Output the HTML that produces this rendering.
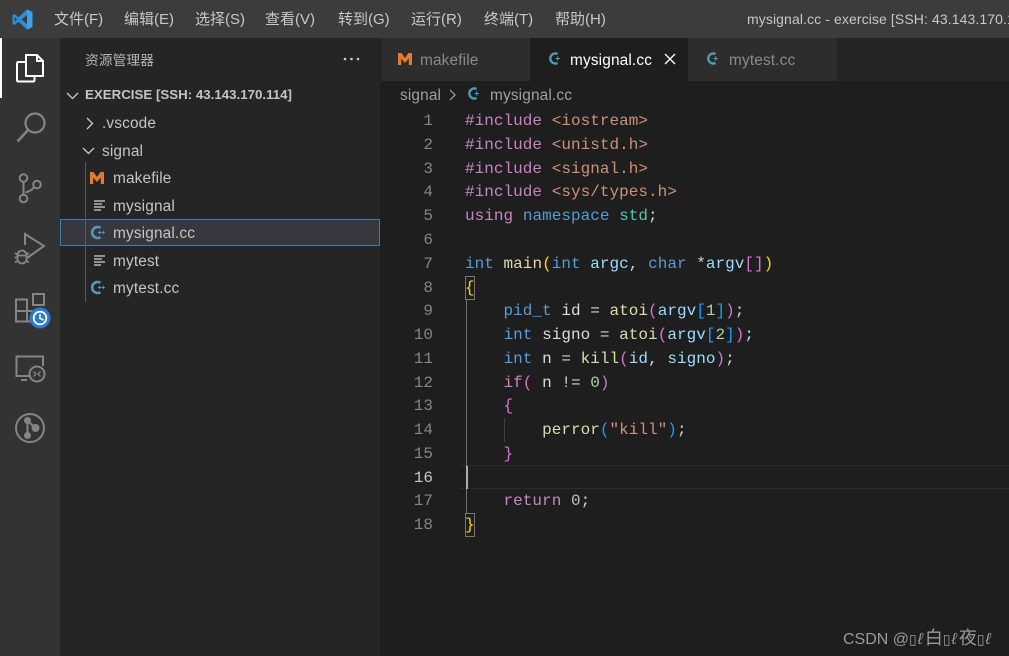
<!DOCTYPE html>
<html><head><meta charset="utf-8">
<style>
html,body{margin:0;padding:0}
body{width:1009px;height:656px;overflow:hidden;position:relative;background:#1e1e1e;font-family:"Liberation Sans","Noto Sans CJK SC",sans-serif}
div,span.a,svg.a{position:absolute}
.m{top:10px;font-size:15px;line-height:20px;color:#c8c8c8;white-space:nowrap}
.t{font-size:15.4px;line-height:20px;color:#c4c4c4;white-space:nowrap;letter-spacing:.15px;margin-top:1px}
.n{left:400px;width:33px;text-align:right;font:16px/24px "Liberation Mono",monospace;color:#858585;margin-top:1px}
.c{left:465px;font:16px/24px "Liberation Mono",monospace;color:#d4d4d4;white-space:pre;letter-spacing:.03px;margin-top:1px}
.k{color:#c586c0}.s{color:#ce9178}.b{color:#569cd6}.g{color:#4ec9b0}.f{color:#dcdcaa}.v{color:#9cdcfe}.y{color:#ffd700}.p{color:#da70d6}.l{color:#179fff}.o{color:#b5cea8}.w{color:#dcdcdc}
svg{overflow:visible}
</style></head><body>
<div style="left:0;top:0;width:1009px;height:38px;background:#3c3c3c"></div>
<div style="left:0;top:38px;width:60px;height:618px;background:#333333"></div>
<div style="left:60px;top:38px;width:320px;height:618px;background:#252526"></div>
<div style="left:380px;top:38px;width:629px;height:43px;background:#252526"></div>
<div style="left:382px;top:38px;width:148px;height:43px;background:#2d2d2d"></div>
<div style="left:530px;top:38px;width:158px;height:43px;background:#1e1e1e"></div>
<div style="left:688px;top:38px;width:149px;height:43px;background:#2d2d2d"></div>
<div style="left:0;top:38px;width:2px;height:60px;background:#fff"></div>

<svg class="a" style="left:12px;top:9px" width="21" height="21" viewBox="0 0 21 21"><path d="M15 0.5 L20.5 3 V18 L15 20.5 L6.5 12.8 L2.500 16 L0.500 15 V6 L2.500 5 L6.500 8.200 Z M15 6 L9.500 10.500 L15 15 Z M2.700 8 V13 L5 10.500 Z" fill="#2b8fdc" fill-rule="evenodd"/><path d="M15 0.5 L20.5 3 V18 L15 20.5 Z" fill="#3da2e8"/></svg>

<div class="m" style="left:54px">文件(F)</div>
<div class="m" style="left:124px">编辑(E)</div>
<div class="m" style="left:195px">选择(S)</div>
<div class="m" style="left:265px">查看(V)</div>
<div class="m" style="left:338px">转到(G)</div>
<div class="m" style="left:411px">运行(R)</div>
<div class="m" style="left:484px">终端(T)</div>
<div class="m" style="left:555px">帮助(H)</div>
<div class="m" style="left:747px;top:9px;font-size:14px;color:#c8c8c8;letter-spacing:.1px">mysignal.cc - exercise [SSH: 43.143.170.114]</div>

<!-- activity icons -->
<svg class="a" style="left:0;top:38px" width="60" height="420" viewBox="0 38 60 420" fill="none" stroke="#858585" stroke-width="2">
<path d="M25 62 H18.500 Q17 62 17 63.500 V80 Q17 81.500 18.500 81.500 H33 Q34.500 81.500 34.500 80 V76" stroke="#fff" stroke-width="2"/>
<path d="M26 76 V55 H37 L43 61 V76 Z M37 54.500 V61 H43" stroke="#fff" stroke-width="2"/>
<circle cx="35" cy="123" r="9.500" stroke-width="2.200"/><path d="M28 130 L17.500 141.500" stroke-width="2.500"/>
<circle cx="23.500" cy="178" r="3.800"/><circle cx="23.500" cy="198.500" r="3.800"/><circle cx="37" cy="184.500" r="3.800"/>
<path d="M23.500 182 V194.500 M34 187.500 Q31 191 25.500 192.500"/>
<path d="M25 245 V234 L44 246 L27 258"/>
<path d="M17.500 255 a4.500 4.500 0 0 1 9 0 v4 a4.500 4.500 0 0 1 -9 0 Z M15 253 l3 2 M29 253 l-3 2 M14.500 257.500 H17.500 M26.500 257.500 H29.500 M15 262.500 l3 -2 M29 262.500 l-3 -2 M18 255.500 H26 M19 251 l1 1.500 M25 251 l-1 1.500" stroke-width="1.800"/>
<path d="M16 299.500 H27 V321.500 H16 Z M16 311 H38 M27 321.500 H36" stroke-width="2"/>
<rect x="33" y="294" width="11" height="11" stroke-width="2"/>
<circle cx="40" cy="318" r="9.500" fill="#2a7bd0" stroke="#2a7bd0"/>
<circle cx="40" cy="318" r="6.300" stroke="#fff" stroke-width="1.800"/>
<path d="M40 314 V318.500 L43.500 320" stroke="#fff" stroke-width="1.500"/>
<path d="M33 376 H16.500 V356.500 H43 V366 M27 380 H21" stroke-width="2"/>
<circle cx="37" cy="374" r="7.500" fill="#333333" stroke-width="2"/>
<path d="M33.500 371.500 L36 374 L33.500 376.500 M40.500 371.500 L38 374 L40.500 376.500" stroke-width="1.300"/>
<circle cx="30" cy="428" r="14" stroke-width="2"/>
<circle cx="27.500" cy="420.500" r="2.500" fill="#858585"/><circle cx="27.500" cy="435.500" r="2.500" fill="#858585"/><circle cx="35.500" cy="428" r="3" fill="#858585"/>
<path d="M27.500 421 V435 M28 421 L35 428" stroke-width="2"/>
</svg>

<!-- sidebar -->
<div class="t" style="left:85px;top:50px;font-size:13.800px;letter-spacing:0;color:#b4b4b4">资源管理器</div>
<svg class="a" style="left:343px;top:57px" width="17" height="4"><circle cx="2" cy="2" r="1.300" fill="#ccc"/><circle cx="8.500" cy="2" r="1.300" fill="#ccc"/><circle cx="15" cy="2" r="1.300" fill="#ccc"/></svg>

<svg class="a" style="left:66px;top:92px" width="13" height="8" fill="none" stroke="#cccccc" stroke-width="1.300"><path d="M1 1 L6.500 6.500 L12 1"/></svg>
<div class="t" style="left:85px;top:84px;font-size:13.300px;font-weight:bold;letter-spacing:0;color:#c4c4c4">EXERCISE [SSH: 43.143.170.114]</div>
<svg class="a" style="left:86px;top:117px" width="8" height="13" fill="none" stroke="#cccccc" stroke-width="1.300"><path d="M1 1 L6.500 6.500 L1 12"/></svg>
<div class="t" style="left:102px;top:113px">.vscode</div>
<svg class="a" style="left:82px;top:147px" width="13" height="8" fill="none" stroke="#cccccc" stroke-width="1.300"><path d="M1 1 L6.500 6.500 L12 1"/></svg>
<div class="t" style="left:102px;top:141px">signal</div>
<div style="left:60px;top:219px;width:318px;height:25px;background:#37373d;border:1px solid #3d7bb5"></div>
<div style="left:85px;top:162px;width:1px;height:140px;background:#585858"></div>

<svg class="a" style="left:90px;top:172px" width="14" height="12" viewBox="0 0 14 12"><path d="M0 12 V0 H3.500 L7 5 L10.500 0 H14 V12 H10.800 V5.500 L7 10 L3.200 5.500 V12 Z" fill="#e37933"/></svg>
<div class="t" style="left:113px;top:168px">makefile</div>
<svg class="a" style="left:94px;top:200px" width="12" height="12" fill="none" stroke="#d4d4d4" stroke-width="1.200"><path d="M0 1 H11 M0 4 H8 M0 7 H11 M0 10 H7"/></svg>
<div class="t" style="left:113px;top:196px">mysignal</div>
<svg class="a" style="left:91px;top:226px" width="14" height="13" viewBox="0 0 14 13" fill="none" stroke="#519aba"><path d="M9.500 1.800 A5.500 5.500 0 1 0 9.500 11.200" stroke-width="2.600"/><path d="M7 6.500 H10.200 M8.600 4.900 V8.100 M10.600 6.500 H13.800 M12.200 4.900 V8.100" stroke-width="1"/></svg>
<div class="t" style="left:113px;top:223px">mysignal.cc</div>
<svg class="a" style="left:94px;top:255px" width="12" height="12" fill="none" stroke="#d4d4d4" stroke-width="1.200"><path d="M0 1 H11 M0 4 H8 M0 7 H11 M0 10 H7"/></svg>
<div class="t" style="left:113px;top:251px">mytest</div>
<svg class="a" style="left:91px;top:281px" width="14" height="13" viewBox="0 0 14 13" fill="none" stroke="#519aba"><path d="M9.500 1.800 A5.500 5.500 0 1 0 9.500 11.200" stroke-width="2.600"/><path d="M7 6.500 H10.200 M8.600 4.900 V8.100 M10.600 6.500 H13.800 M12.200 4.900 V8.100" stroke-width="1"/></svg>
<div class="t" style="left:113px;top:278px">mytest.cc</div>

<!-- tabs -->
<svg class="a" style="left:398px;top:53px" width="14" height="12" viewBox="0 0 14 12"><path d="M0 12 V0 H3.500 L7 5 L10.500 0 H14 V12 H10.800 V5.500 L7 10 L3.200 5.500 V12 Z" fill="#e37933"/></svg>
<div class="t" style="left:420px;top:50px;color:#8a8a8a">makefile</div>
<svg class="a" style="left:549px;top:52px" width="14" height="13" viewBox="0 0 14 13" fill="none" stroke="#519aba"><path d="M8.500 2 A5 5 0 1 0 8.500 11" stroke-width="2.400"/><path d="M6.500 6.500 H11 M8.750 4.300 V8.700" stroke-width="1"/></svg>
<div class="t" style="left:570px;top:50px;color:#ffffff">mysignal.cc</div>
<svg class="a" style="left:664px;top:53px" width="12" height="12" fill="none" stroke="#ffffff" stroke-width="1.400"><path d="M1 1 L11 11 M11 1 L1 11"/></svg>
<svg class="a" style="left:707px;top:52px" width="14" height="13" viewBox="0 0 14 13" fill="none" stroke="#519aba"><path d="M8.500 2 A5 5 0 1 0 8.500 11" stroke-width="2.400"/><path d="M6.500 6.500 H11 M8.750 4.300 V8.700" stroke-width="1"/></svg>
<div class="t" style="left:729px;top:50px;color:#8a8a8a">mytest.cc</div>

<!-- breadcrumb -->
<div class="t" style="left:400px;top:85px;color:#a0a0a0">signal</div>
<svg class="a" style="left:449px;top:89px" width="7" height="12" fill="none" stroke="#a9a9a9" stroke-width="1.200"><path d="M1 1 L6 6 L1 11"/></svg>
<svg class="a" style="left:468px;top:87px" width="14" height="13" viewBox="0 0 14 13" fill="none" stroke="#519aba"><path d="M8.500 2 A5 5 0 1 0 8.500 11" stroke-width="2.400"/><path d="M6.500 6.500 H11 M8.750 4.300 V8.700" stroke-width="1"/></svg>
<div class="t" style="left:490px;top:85px;color:#a0a0a0">mysignal.cc</div>

<!-- editor deco -->
<div style="left:460px;top:465px;width:549px;height:22px;border-top:1px solid #2b2b2b;border-bottom:1px solid #2b2b2b"></div>
<div style="left:466px;top:299px;width:1px;height:214px;background:#707070"></div>
<div style="left:504px;top:418px;width:1px;height:24px;background:#404040"></div>
<div style="left:466px;top:466px;width:2px;height:23px;background:#aeafad"></div>
<div style="left:465px;top:276px;width:8px;height:22px;border:1px solid #777"></div>
<div style="left:465px;top:513px;width:8px;height:22px;border:1px solid #777"></div>

<div class="n" style="top:108px">1</div><div class="c" style="top:108px"><span class="k">#include</span> <span class="s">&lt;iostream&gt;</span></div>
<div class="n" style="top:132px">2</div><div class="c" style="top:132px"><span class="k">#include</span> <span class="s">&lt;unistd.h&gt;</span></div>
<div class="n" style="top:156px">3</div><div class="c" style="top:156px"><span class="k">#include</span> <span class="s">&lt;signal.h&gt;</span></div>
<div class="n" style="top:179px">4</div><div class="c" style="top:179px"><span class="k">#include</span> <span class="s">&lt;sys/types.h&gt;</span></div>
<div class="n" style="top:203px">5</div><div class="c" style="top:203px"><span class="k">using</span> <span class="b">namespace</span> <span class="g">std</span>;</div>
<div class="n" style="top:227px">6</div>
<div class="n" style="top:251px">7</div><div class="c" style="top:251px"><span class="b">int</span> <span class="f">main</span><span class="y">(</span><span class="b">int</span> <span class="v">argc</span>, <span class="b">char</span> *<span class="v">argv</span><span class="p">[]</span><span class="y">)</span></div>
<div class="n" style="top:275px">8</div><div class="c" style="top:275px"><span class="y">{</span></div>
<div class="n" style="top:298px">9</div><div class="c" style="top:298px">    <span class="b">pid_t</span> <span class="w">id</span> = <span class="f">atoi</span><span class="p">(</span><span class="v">argv</span><span class="l">[</span><span class="o">1</span><span class="l">]</span><span class="p">)</span>;</div>
<div class="n" style="top:322px">10</div><div class="c" style="top:322px">    <span class="b">int</span> <span class="w">signo</span> = <span class="f">atoi</span><span class="p">(</span><span class="v">argv</span><span class="l">[</span><span class="o">2</span><span class="l">]</span><span class="p">)</span>;</div>
<div class="n" style="top:346px">11</div><div class="c" style="top:346px">    <span class="b">int</span> <span class="w">n</span> = <span class="f">kill</span><span class="p">(</span><span class="v">id</span>, <span class="v">signo</span><span class="p">)</span>;</div>
<div class="n" style="top:370px">12</div><div class="c" style="top:370px">    <span class="k">if</span><span class="p">(</span> <span class="w">n</span> != <span class="o">0</span><span class="p">)</span></div>
<div class="n" style="top:393px">13</div><div class="c" style="top:393px">    <span class="p">{</span></div>
<div class="n" style="top:417px">14</div><div class="c" style="top:417px">        <span class="f">perror</span><span class="l">(</span><span class="s">"kill"</span><span class="l">)</span>;</div>
<div class="n" style="top:441px">15</div><div class="c" style="top:441px">    <span class="p">}</span></div>
<div class="n" style="top:465px;color:#c6c6c6">16</div>
<div class="n" style="top:488px">17</div><div class="c" style="top:488px">    <span class="k">return</span> <span class="o">0</span>;</div>
<div class="n" style="top:512px">18</div><div class="c" style="top:512px"><span class="y">}</span></div>

<div style="left:843px;top:627px;font-size:16px;line-height:22px;color:#9a9a9a;white-space:nowrap;font-family:'Liberation Sans','Noto Sans CJK SC',sans-serif">CSDN @<span style="font-size:14px;letter-spacing:1px">▯</span><i style="letter-spacing:2px">ℓ</i><span style="font-size:18px">白</span><span style="font-size:14px;letter-spacing:1px">▯</span><i style="letter-spacing:2px">ℓ</i><span style="font-size:18px">夜</span><span style="font-size:14px;letter-spacing:1px">▯</span><i>ℓ</i></div>
</body></html>
